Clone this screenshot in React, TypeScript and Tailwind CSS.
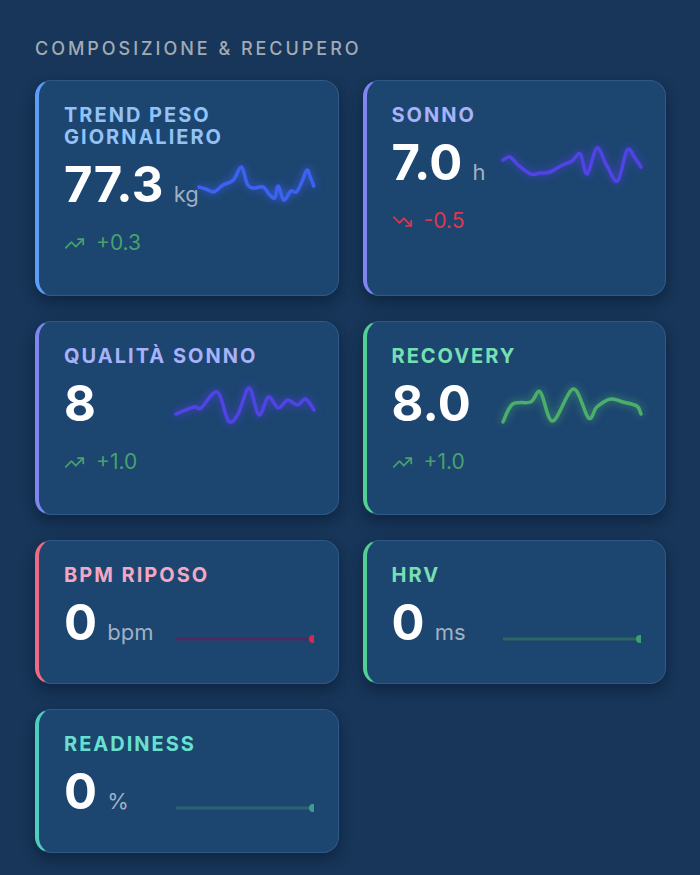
import React from "react";
import { TrendingUp, TrendingDown } from "lucide-react";

type Pt = [number, number];

function smooth(pts: Pt[]): string {
  let d = `M${pts[0][0]},${pts[0][1]}`;
  for (let i = 0; i < pts.length - 1; i++) {
    const p0 = pts[i - 1] || pts[i];
    const p1 = pts[i];
    const p2 = pts[i + 1];
    const p3 = pts[i + 2] || p2;
    const c1x = p1[0] + (p2[0] - p0[0]) / 6;
    const c1y = p1[1] + (p2[1] - p0[1]) / 6;
    const c2x = p2[0] - (p3[0] - p1[0]) / 6;
    const c2y = p2[1] - (p3[1] - p1[1]) / 6;
    d += ` C${c1x},${c1y} ${c2x},${c2y} ${p2[0]},${p2[1]}`;
  }
  return d;
}

type Card = {
  title: string[];
  value: string;
  unit?: string;
  titleClass: string;
  accentClass: string;
  trend?: { dir: "up" | "down"; text: string };
  spark?: { pts: Pt[]; color: string; glowClass: string };
  flat?: { line: string; dot: string };
};

const cards: Card[] = [
  {
    title: ["TREND PESO", "GIORNALIERO"],
    value: "77.3",
    unit: "kg",
    titleClass: "text-[#93c2f7]",
    accentClass: "border-l-[#5e9df5]",
    trend: { dir: "up", text: "+0.3" },
    spark: {
      color: "#3d62f2",
      glowClass: "drop-shadow-[0_0_4px_rgba(61,98,242,0.85)]",
      pts: [
        [0, 22], [6, 24], [13, 27], [21, 20], [30, 15], [37, 2], [42, 19], [47, 23],
        [56, 22], [61, 29], [66, 33], [69, 21], [74, 35], [80, 26], [85, 27], [90, 16],
        [94, 5], [97, 12], [100, 21],
      ],
    },
  },
  {
    title: ["SONNO"],
    value: "7.0",
    unit: "h",
    titleClass: "text-[#a7b2f8]",
    accentClass: "border-l-[#7f86f2]",
    trend: { dir: "down", text: "-0.5" },
    spark: {
      color: "#5044e6",
      glowClass: "drop-shadow-[0_0_4px_rgba(80,68,230,0.85)]",
      pts: [
        [0, 17], [5, 14], [11, 22], [20, 31], [27, 30], [34, 29], [43, 22], [50, 18],
        [56, 11], [61, 31], [68, 5], [75, 22], [83, 38], [90, 7], [96, 16], [100, 24],
      ],
    },
  },
  {
    title: ["QUALITÀ SONNO"],
    value: "8",
    titleClass: "text-[#a7b2f8]",
    accentClass: "border-l-[#7f86f2]",
    trend: { dir: "up", text: "+1.0" },
    spark: {
      color: "#5044e6",
      glowClass: "drop-shadow-[0_0_4px_rgba(80,68,230,0.85)]",
      pts: [
        [0, 30], [13, 23], [18, 24], [30, 8], [38, 37], [45, 30], [53, 4], [60, 31],
        [67, 13], [74, 24], [81, 16], [88, 21], [94, 15], [100, 26],
      ],
    },
  },
  {
    title: ["RECOVERY"],
    value: "8.0",
    titleClass: "text-[#76e0b3]",
    accentClass: "border-l-[#52cf95]",
    trend: { dir: "up", text: "+1.0" },
    spark: {
      color: "#4cae6c",
      glowClass: "drop-shadow-[0_0_4px_rgba(76,174,108,0.75)]",
      pts: [
        [0, 38], [7, 20], [20, 18], [27, 8], [36, 37], [51, 5], [62, 34], [68, 23],
        [78, 15], [87, 18], [97, 22], [100, 30],
      ],
    },
  },
  {
    title: ["BPM RIPOSO"],
    value: "0",
    unit: "bpm",
    titleClass: "text-[#f2a8c2]",
    accentClass: "border-l-[#ec6b83]",
    flat: { line: "#4e2b5c", dot: "#d6294f" },
  },
  {
    title: ["HRV"],
    value: "0",
    unit: "ms",
    titleClass: "text-[#76e0b3]",
    accentClass: "border-l-[#52cf95]",
    flat: { line: "#2a6760", dot: "#3c9f6e" },
  },
  {
    title: ["READINESS"],
    value: "0",
    unit: "%",
    titleClass: "text-[#69e0cf]",
    accentClass: "border-l-[#4fcdbd]",
    flat: { line: "#2a646e", dot: "#3a9c92" },
  },
];

function Spark({ pts, color, glowClass }: { pts: Pt[]; color: string; glowClass: string }) {
  return (
    <svg
      className={`block h-[40px] w-full overflow-visible ${glowClass}`}
      viewBox="0 0 100 40"
      preserveAspectRatio="none"
    >
      <path
        d={smooth(pts)}
        fill="none"
        stroke={color}
        strokeWidth={3.5}
        strokeLinecap="round"
        strokeLinejoin="round"
        vectorEffect="non-scaling-stroke"
      />
    </svg>
  );
}

function Flat({ line, dot }: { line: string; dot: string }) {
  return (
    <svg className="block h-[40px] w-full" viewBox="0 0 138 40">
      <line x1={0} y1={36} x2={137} y2={36} stroke={line} strokeWidth={3} />
      <circle cx={137} cy={36} r={4} fill={dot} />
    </svg>
  );
}

function MetricCard({ c }: { c: Card }) {
  return (
    <div
      className={`rounded-[16px] border border-[#2f5a86] border-l-4 ${c.accentClass} bg-[#1c4570] pl-[25px] pr-[24px] pt-[23px] pb-[36px] shadow-[0_6px_14px_rgba(5,15,35,0.45)]`}
    >
      <div
        className={`text-[20px] font-bold leading-[22px] tracking-[0.1em] ${c.titleClass}`}
      >
        {c.title.map((t) => (
          <div key={t}>{t}</div>
        ))}
      </div>
      <div className="mt-[13px] flex h-[48px] items-center">
        <div className="flex shrink-0 items-baseline">
          <span className="text-[49px] font-bold leading-[48px] tracking-[0.005em] text-white">
            {c.value}
          </span>
          {c.unit && (
            <span className="ml-[10px] text-[22px] leading-none text-[#9fb1c4]">{c.unit}</span>
          )}
        </div>
        <div className="ml-auto min-w-0 max-w-[138px] flex-1">
          {c.spark && <Spark {...c.spark} />}
          {c.flat && <Flat {...c.flat} />}
        </div>
      </div>
      {c.trend && (
        <div
          className={`mt-[18px] flex h-[32px] items-center gap-[11px] text-[21px] ${
            c.trend.dir === "up" ? "text-[#46a26c]" : "text-[#e0354f]"
          }`}
        >
          {c.trend.dir === "up" ? (
            <TrendingUp size={21} strokeWidth={2} />
          ) : (
            <TrendingDown size={21} strokeWidth={2} />
          )}
          <span>{c.trend.text}</span>
        </div>
      )}
    </div>
  );
}

export default function App() {
  return (
    <div
      className="min-h-[875px] w-[700px] bg-[#173659] pl-[35px] pr-[34px] pt-[37px] pb-[20px]"
      style={{ fontFamily: "Inter, 'Noto Sans', sans-serif" }}
    >
      <div className="text-[18px] font-medium leading-[24px] tracking-[0.165em] text-[#a3abb4]">
        COMPOSIZIONE &amp; RECUPERO
      </div>
      <div className="mt-[19px] grid grid-cols-2 gap-x-[24px] gap-y-[25px]">
        {cards.map((c) => (
          <MetricCard key={c.title.join(" ")} c={c} />
        ))}
      </div>
    </div>
  );
}
